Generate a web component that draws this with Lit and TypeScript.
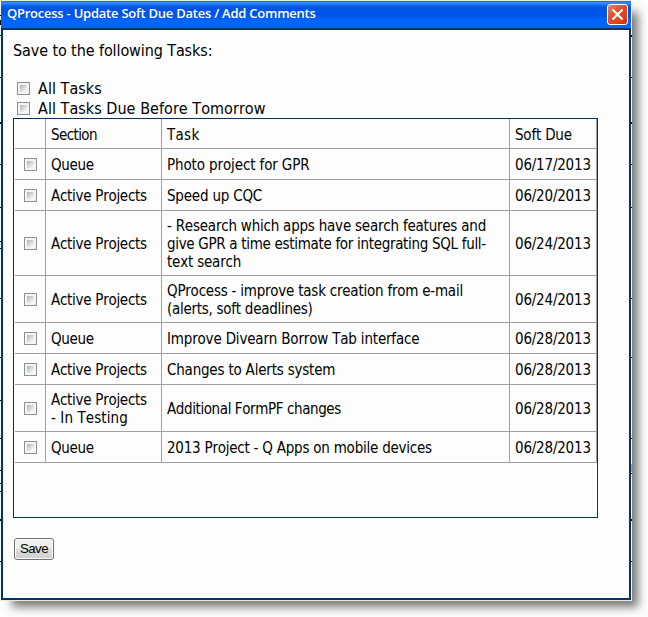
import { LitElement, html, css } from "lit";
import { customElement } from "lit/decorators.js";

/** A line of text with its tracking in px. */
type Line = [text: string, tracking: number];
interface Task { section: Line[]; lines: Line[]; due: string; h: number }

const QUEUE: Line = ["Queue", -0.3];
const ACTIVE: Line = ["Active Projects", -0.28];

const TASKS: Task[] = [
  { section: [QUEUE], lines: [["Photo project for GPR", -0.12]], due: "06/17/2013", h: 31 },
  { section: [ACTIVE], lines: [["Speed up CQC", -0.2]], due: "06/20/2013", h: 31 },
  { section: [ACTIVE], lines: [["- Research which apps have search features and", -0.22], ["give GPR a time estimate for integrating SQL full-", -0.31], ["text search", -0.2]], due: "06/24/2013", h: 65 },
  { section: [ACTIVE], lines: [["QProcess - improve task creation from e-mail", -0.23], ["(alerts, soft deadlines)", -0.27]], due: "06/24/2013", h: 47 },
  { section: [QUEUE], lines: [["Improve Divearn Borrow Tab interface", -0.18]], due: "06/28/2013", h: 31 },
  { section: [ACTIVE], lines: [["Changes to Alerts system", -0.2]], due: "06/28/2013", h: 31 },
  { section: [ACTIVE, ["- In Testing", 0.1]], lines: [["Additional FormPF changes", -0.4]], due: "06/28/2013", h: 47 },
  { section: [QUEUE], lines: [["2013 Project - Q Apps on mobile devices", -0.23]], due: "06/28/2013", h: 31 },
];

// Slivers of the page behind that show at either side of the dialog.
const LEFT_TICKS: [y: number, h: number][] = [[15, 1], [20, 5], [35, 1], [77, 1], [122, 2], [164, 1], [207, 1], [241, 1], [248, 1], [298, 1], [357, 1], [400, 1], [438, 1], [470, 1], [483, 1], [491, 1], [519, 2], [561, 1]];
const RIGHT_TICKS: [y: number, h: number][] = [[35, 2], [77, 1], [122, 2], [164, 1], [207, 1], [298, 1], [357, 1], [438, 1], [473, 1], [519, 2], [561, 1]];

const text = (lines: Line[]) => html`<div>${lines.map(([t, s]) => html`<div style="letter-spacing:${s}px">${t}</div>`)}</div>`;

@customElement("app-root")
export class AppRoot extends LitElement {
  static styles = css`
    :host { display: block; position: relative; width: 648px; height: 617px; overflow: hidden; background: #fdfdfd; color: #000; font-family: "DejaVu Sans Condensed", "DejaVu Sans", sans-serif; font-stretch: condensed; font-kerning: none; }
    .page { position: absolute; left: 0; top: 0; width: 632px; height: 601px; box-sizing: border-box; border: solid #ece9d8; border-width: 1px 0; background: #fdfdfd; box-shadow: 9px 9px 9px -3px #777; }
    .tick { position: absolute; left: 0; width: 1px; background: #000; }
    .tick.right { left: 631px; }
    .hint { position: absolute; left: 631px; top: 463px; width: 1px; height: 8px; background: #6cb4d8; }
    .window { position: absolute; left: 1px; top: 1px; width: 630px; height: 599px; box-sizing: border-box; border: 2px solid #036; border-top: 0; background: #fdfdfd; }
    .bar { margin: 0 -2px; height: 27px; border-bottom: 2px solid #036; display: flex; justify-content: space-between; background: linear-gradient(#1c62d8 0, #3b94ff 2px, #1269f0 4px, #0054e3 7px, #0055ea 14px, #0066ff 20px, #06f 27px); padding: 0 3px 0 6px; }
    .title { color: #fff; font: 600 13px/25px "Open Sans", sans-serif; letter-spacing: -0.24px; white-space: nowrap; }
    .close { margin-top: 3px; width: 21px; height: 21px; flex: none; }
    .body { padding: 0 10px; }
    .lead { margin: 11px 0 0; font-size: 16px; line-height: 20px; white-space: nowrap; letter-spacing: -0.1px; }
    .opts { margin-top: 17px; }
    .opt { display: flex; align-items: center; height: 20px; font-size: 16px; padding-left: 4px; gap: 8px; white-space: nowrap; letter-spacing: 0.04px; }
    .cb { display: block; width: 13px; height: 13px; box-sizing: border-box; border: 1px solid #8e8f8f; background: linear-gradient(135deg, #aeb3b9, #f6f6f6 85%) 2px 2px / 7px 7px no-repeat, #f4f4f4; }
    .box { width: 585px; height: 400px; box-sizing: border-box; border: 1px solid #036; padding-left: 1px; font-size: 15px; line-height: 18px; }
    .row { display: grid; grid-template-columns: 31px 116px 348px 87px; }
    .cell { display: flex; align-items: center; border-right: 1px solid #a0a0a0; border-bottom: 1px solid #a0a0a0; padding: 2px 0 0 5px; white-space: nowrap; box-sizing: border-box; }
    .due { letter-spacing: -0.2px; }
    .pick { justify-content: center; padding: 0; }
    .save { display: block; margin: 20px 0 0 1px; width: 40px; height: 22px; padding: 0 0 2px; border: 1px solid #707070; border-radius: 3px; background: linear-gradient(#f2f2f2, #ebebeb 50%, #ddd 50%, #cfcfcf); color: #000; font: 13.3px "Liberation Sans", Arial, sans-serif; letter-spacing: -0.6px; box-shadow: inset 0 0 0 1px #fcfcfc; }
  `;

  render() {
    return html`
      <div class="page">
        ${LEFT_TICKS.map(([y, h]) => html`<div class="tick" style="top:${y - 1}px;height:${h}px"></div>`)}
        ${RIGHT_TICKS.map(([y, h]) => html`<div class="tick right" style="top:${y - 1}px;height:${h}px"></div>`)}
        <div class="hint"></div>
      </div>
      <div class="window">
        <div class="bar">
          <span class="title">QProcess - Update Soft Due Dates / Add Comments</span>
          <svg class="close" viewBox="0 0 21 21">
            <defs><linearGradient id="red" x1="0" y1="0" x2="1" y2="1"><stop offset="0" stop-color="#e88a70"/><stop offset=".4" stop-color="#e0502c"/><stop offset=".75" stop-color="#e04010"/><stop offset="1" stop-color="#b83010"/></linearGradient></defs>
            <rect x=".5" y=".5" width="20" height="20" rx="2.5" fill="url(#red)" stroke="#fff"/>
            <path d="M5.5 5.5l10 10M15.5 5.5l-10 10" stroke="#fff" stroke-width="2.2"/>
          </svg>
        </div>
        <div class="body">
          <p class="lead">Save to the following Tasks:</p>
          <div class="opts">
            <label class="opt"><span class="cb"></span><span>All Tasks</span></label>
            <label class="opt"><span class="cb"></span><span>All Tasks Due Before Tomorrow</span></label>
          </div>
          <div class="box">
            <div class="row" style="height:30px">
              <div class="cell"></div>
              <div class="cell">${text([["Section", -0.6]])}</div>
              <div class="cell">${text([["Task", 0.3]])}</div>
              <div class="cell">${text([["Soft Due", -0.2]])}</div>
            </div>
            ${TASKS.map(t => html`
              <div class="row" style="height:${t.h}px">
                <div class="cell pick"><span class="cb"></span></div>
                <div class="cell">${text(t.section)}</div>
                <div class="cell">${text(t.lines)}</div>
                <div class="cell due">${t.due}</div>
              </div>`)}
          </div>
          <button class="save">Save</button>
        </div>
      </div>`;
  }
}
